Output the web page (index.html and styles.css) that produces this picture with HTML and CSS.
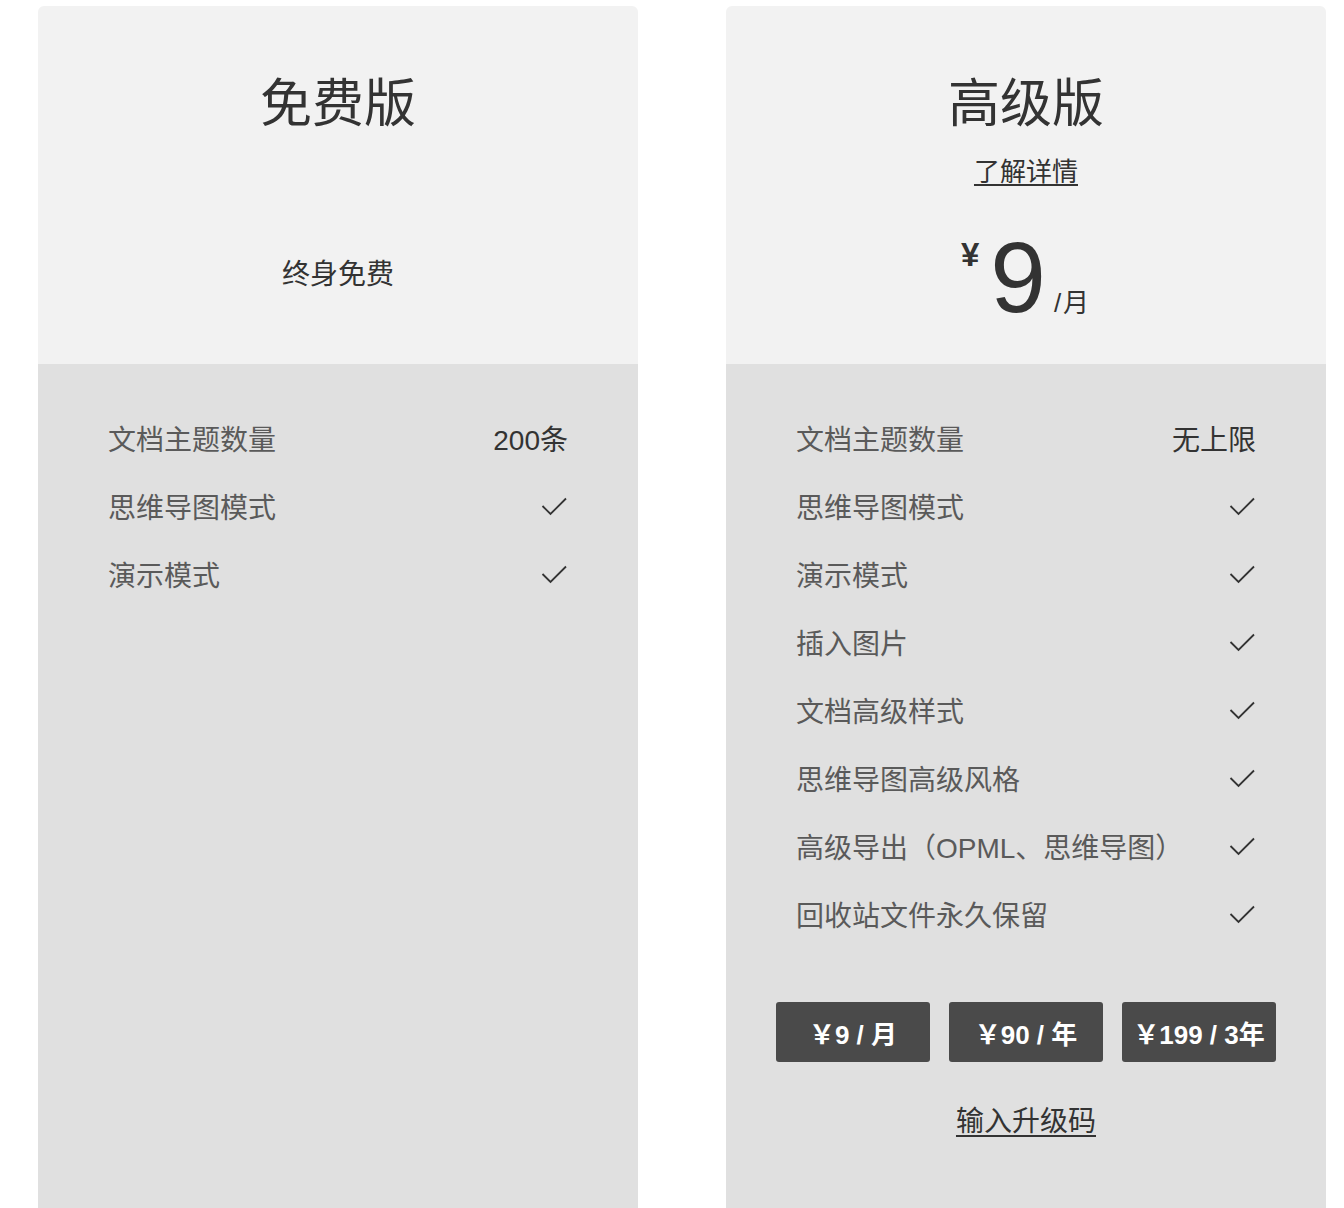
FILE: index.html
```html
<!DOCTYPE html>
<html>

<head>
	<meta charset="utf-8">
	<title>升级</title>
	<meta name="viewport" content="width=device-width, initial-scale=1">
	<link rel="stylesheet" href="styles.css">
</head>

<body>
	<section class='plans'>
		<div class='plan'>
			<div class='plan__head'>
				<h1 class='plan__name'>免费版</h1>
				<p class='plan__free'>终身免费</p>
			</div>
			<div class='plan__body'>
				<div class='feature'>
					<span class='feature__label'>文档主题数量</span>
					<span class='feature__value'>200条</span>
				</div>
				<div class='feature'>
					<span class='feature__label'>思维导图模式</span>
					<svg class='check' viewBox='0 0 26 20'><polyline points='1.5,10 9.5,18 25,2.5'/></svg>
				</div>
				<div class='feature'>
					<span class='feature__label'>演示模式</span>
					<svg class='check' viewBox='0 0 26 20'><polyline points='1.5,10 9.5,18 25,2.5'/></svg>
				</div>
			</div>
		</div>

		<div class='plan'>
			<div class='plan__head'>
				<h1 class='plan__name'>高级版</h1>
				<a class='plan__more' href='#'>了解详情</a>
				<div class='price'>
					<span class='price__currency'>¥</span>
					<span class='price__num'>9</span>
					<span class='price__unit'>/月</span>
				</div>
			</div>
			<div class='plan__body'>
				<div class='feature'>
					<span class='feature__label'>文档主题数量</span>
					<span class='feature__value'>无上限</span>
				</div>
				<div class='feature'>
					<span class='feature__label'>思维导图模式</span>
					<svg class='check' viewBox='0 0 26 20'><polyline points='1.5,10 9.5,18 25,2.5'/></svg>
				</div>
				<div class='feature'>
					<span class='feature__label'>演示模式</span>
					<svg class='check' viewBox='0 0 26 20'><polyline points='1.5,10 9.5,18 25,2.5'/></svg>
				</div>
				<div class='feature'>
					<span class='feature__label'>插入图片</span>
					<svg class='check' viewBox='0 0 26 20'><polyline points='1.5,10 9.5,18 25,2.5'/></svg>
				</div>
				<div class='feature'>
					<span class='feature__label'>文档高级样式</span>
					<svg class='check' viewBox='0 0 26 20'><polyline points='1.5,10 9.5,18 25,2.5'/></svg>
				</div>
				<div class='feature'>
					<span class='feature__label'>思维导图高级风格</span>
					<svg class='check' viewBox='0 0 26 20'><polyline points='1.5,10 9.5,18 25,2.5'/></svg>
				</div>
				<div class='feature'>
					<span class='feature__label'>高级导出（OPML、思维导图）</span>
					<svg class='check' viewBox='0 0 26 20'><polyline points='1.5,10 9.5,18 25,2.5'/></svg>
				</div>
				<div class='feature'>
					<span class='feature__label'>回收站文件永久保留</span>
					<svg class='check' viewBox='0 0 26 20'><polyline points='1.5,10 9.5,18 25,2.5'/></svg>
				</div>

				<div class='buy'>
					<a class='buy__btn' href='#'>￥9 / 月</a>
					<a class='buy__btn' href='#'>￥90 / 年</a>
					<a class='buy__btn' href='#'>￥199 / 3年</a>
				</div>
				<a class='plan__code' href='#'>输入升级码</a>
			</div>
		</div>
	</section>
</body>

</html>
```

FILE: styles.css
```css
/* page */

* {
	box-sizing: border-box;
}

html,
body {
	margin: 0;
	padding: 0;
	font-family: 'Liberation Sans', 'Noto Sans CJK SC', sans-serif;
	background: #fff;
	color: #333;
}

p,
h1,
a {
	margin: 0;
	font-weight: 400;
}

a,
a:visited {
	color: #333;
}

/* plans */

.plans {
	display: flex;
	gap: 88px;
	padding: 6px 0 0 38px;
}

.plan {
	width: 600px;
	min-height: 1260px;
	display: flex;
	flex-direction: column;
	border-radius: 6px 6px 0 0;
	overflow: hidden;
}

.plan__head {
	height: 358px;
	background: #f2f2f2;
	display: flex;
	flex-direction: column;
	align-items: center;
}

.plan__name {
	margin-top: 63px;
	font-size: 52px;
	line-height: 70px;
	color: #333;
}

.plan__free {
	margin-top: 116px;
	font-size: 28px;
	line-height: 40px;
}

.plan__more {
	margin-top: 15px;
	font-size: 26px;
	line-height: 36px;
	text-decoration: underline;
	text-underline-offset: 3px;
}

/* price */

.price {
	margin-top: 37px;
	display: flex;
	align-items: baseline;
	color: #333;
}

.price__currency {
	align-self: flex-start;
	margin-top: 11px;
	margin-right: 11px;
	font-size: 33px;
	line-height: 1;
	font-weight: 700;
}

.price__num {
	font-size: 100px;
	line-height: 100px;
}

.price__unit {
	margin-left: 8px;
	font-size: 26px;
	letter-spacing: 2px;
}

/* features */

.plan__body {
	flex: 1;
	background: #e0e0e0;
	padding: 40px 70px 80px;
	display: flex;
	flex-direction: column;
}

.feature {
	height: 68px;
	display: flex;
	align-items: center;
	justify-content: space-between;
	font-size: 28px;
}

.feature__label {
	color: #5a5a5a;
}

.feature__value {
	color: #333;
}

.check {
	width: 26px;
	height: 20px;
	margin-right: 1px;
	fill: none;
	stroke: #333;
	stroke-width: 1.8;
}

/* buy */

.buy {
	margin: 54px -20px 0;
	display: flex;
	justify-content: space-between;
}

.buy__btn,
.buy__btn:visited {
	width: 154px;
	height: 60px;
	display: flex;
	align-items: center;
	justify-content: center;
	background: #4a4a4a;
	border-radius: 3px;
	color: #fff;
	font-size: 26px;
	font-weight: 700;
	text-decoration: none;
}

.plan__code {
	align-self: center;
	margin-top: 40px;
	font-size: 28px;
	line-height: 40px;
	text-decoration: underline;
	text-underline-offset: 4px;
}
```
